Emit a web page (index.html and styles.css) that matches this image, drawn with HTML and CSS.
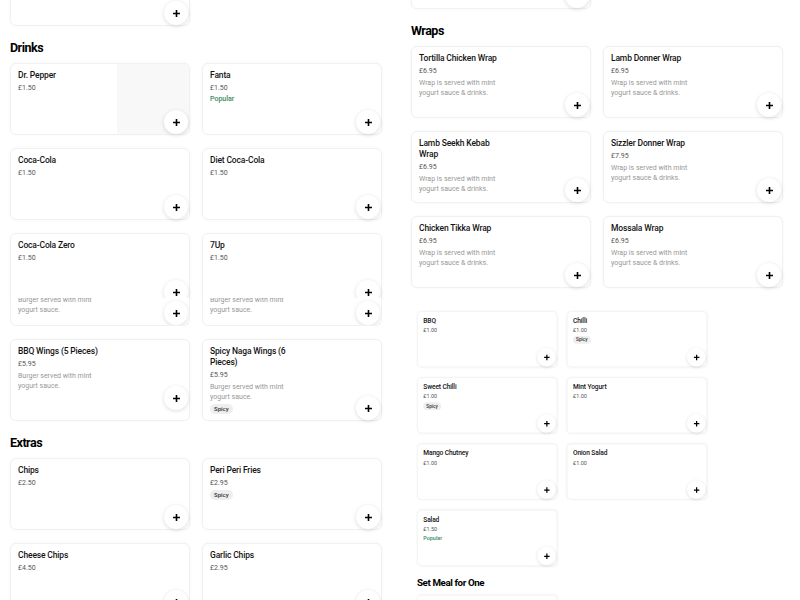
FILE: index.html
```html
<!DOCTYPE html>
<html lang="en">
<head>
<meta charset="utf-8">
<title>Menu</title>
<link rel="stylesheet" href="styles.css">
</head>
<body>
<div class="page">
  <div class="col col-left">
    <div class="grid">
      <div class="card"><div class="info"></div><button class="add"><svg viewBox="0 0 9 9"><path d="M4.5 1v7M1 4.5h7"/></svg></button></div>
    </div>

    <h2 class="sec-title">Drinks</h2>
    <div class="grid">
      <div class="card">
        <div class="info"><p class="name">Dr. Pepper</p><p class="price">£1.50</p></div>
        <div class="thumb"></div>
        <button class="add"><svg viewBox="0 0 9 9"><path d="M4.5 1v7M1 4.5h7"/></svg></button>
      </div>
      <div class="card">
        <div class="info"><p class="name">Fanta</p><p class="price">£1.50</p><p class="popular">Popular</p></div>
        <button class="add"><svg viewBox="0 0 9 9"><path d="M4.5 1v7M1 4.5h7"/></svg></button>
      </div>
      <div class="card">
        <div class="info"><p class="name">Coca-Cola</p><p class="price">£1.50</p></div>
        <button class="add"><svg viewBox="0 0 9 9"><path d="M4.5 1v7M1 4.5h7"/></svg></button>
      </div>
      <div class="card">
        <div class="info"><p class="name">Diet Coca-Cola</p><p class="price">£1.50</p></div>
        <button class="add"><svg viewBox="0 0 9 9"><path d="M4.5 1v7M1 4.5h7"/></svg></button>
      </div>
      <div class="stack">
        <div class="card">
          <div class="info"><p class="name">Coca-Cola Zero</p><p class="price">£1.50</p></div>
          <button class="add"><svg viewBox="0 0 9 9"><path d="M4.5 1v7M1 4.5h7"/></svg></button>
        </div>
        <div class="card ghost">
          <p class="desc">Burger served with mint<br>yogurt sauce.</p>
          <button class="add"><svg viewBox="0 0 9 9"><path d="M4.5 1v7M1 4.5h7"/></svg></button>
        </div>
      </div>
      <div class="stack">
        <div class="card">
          <div class="info"><p class="name">7Up</p><p class="price">£1.50</p></div>
          <button class="add"><svg viewBox="0 0 9 9"><path d="M4.5 1v7M1 4.5h7"/></svg></button>
        </div>
        <div class="card ghost">
          <p class="desc">Burger served with mint<br>yogurt sauce.</p>
          <button class="add"><svg viewBox="0 0 9 9"><path d="M4.5 1v7M1 4.5h7"/></svg></button>
        </div>
      </div>
      <div class="card">
        <div class="info"><p class="name">BBQ Wings (5 Pieces)</p><p class="price">£5.95</p><p class="desc">Burger served with mint yogurt sauce.</p></div>
        <button class="add add-raised"><svg viewBox="0 0 9 9"><path d="M4.5 1v7M1 4.5h7"/></svg></button>
      </div>
      <div class="card">
        <div class="info"><p class="name">Spicy Naga Wings (6 Pieces)</p><p class="price">£5.95</p><p class="desc">Burger served with mint yogurt sauce.</p><span class="tag tag-gap">Spicy</span></div>
        <button class="add"><svg viewBox="0 0 9 9"><path d="M4.5 1v7M1 4.5h7"/></svg></button>
      </div>
    </div>

    <h2 class="sec-title">Extras</h2>
    <div class="grid">
      <div class="card">
        <div class="info"><p class="name">Chips</p><p class="price">£2.50</p></div>
        <button class="add"><svg viewBox="0 0 9 9"><path d="M4.5 1v7M1 4.5h7"/></svg></button>
      </div>
      <div class="card">
        <div class="info"><p class="name">Peri Peri Fries</p><p class="price">£2.95</p><span class="tag">Spicy</span></div>
        <button class="add"><svg viewBox="0 0 9 9"><path d="M4.5 1v7M1 4.5h7"/></svg></button>
      </div>
      <div class="card">
        <div class="info"><p class="name">Cheese Chips</p><p class="price">£4.50</p></div>
        <button class="add"><svg viewBox="0 0 9 9"><path d="M4.5 1v7M1 4.5h7"/></svg></button>
      </div>
      <div class="card">
        <div class="info"><p class="name">Garlic Chips</p><p class="price">£2.95</p></div>
        <button class="add"><svg viewBox="0 0 9 9"><path d="M4.5 1v7M1 4.5h7"/></svg></button>
      </div>
    </div>
  </div>

  <div class="col col-right">
    <div class="grid">
      <div class="card"><div class="info"></div><button class="add"><svg viewBox="0 0 9 9"><path d="M4.5 1v7M1 4.5h7"/></svg></button></div>
    </div>

    <h2 class="sec-title">Wraps</h2>
    <div class="grid">
      <div class="card">
        <div class="info"><p class="name">Tortilla Chicken Wrap</p><p class="price">£6.95</p><p class="desc">Wrap is served with mint yogurt sauce &amp; drinks.</p></div>
        <button class="add"><svg viewBox="0 0 9 9"><path d="M4.5 1v7M1 4.5h7"/></svg></button>
      </div>
      <div class="card">
        <div class="info"><p class="name">Lamb Donner Wrap</p><p class="price">£6.95</p><p class="desc">Wrap is served with mint yogurt sauce &amp; drinks.</p></div>
        <button class="add"><svg viewBox="0 0 9 9"><path d="M4.5 1v7M1 4.5h7"/></svg></button>
      </div>
      <div class="card">
        <div class="info"><p class="name">Lamb Seekh Kebab Wrap</p><p class="price">£6.95</p><p class="desc">Wrap is served with mint yogurt sauce &amp; drinks.</p></div>
        <button class="add"><svg viewBox="0 0 9 9"><path d="M4.5 1v7M1 4.5h7"/></svg></button>
      </div>
      <div class="card">
        <div class="info"><p class="name">Sizzler Donner Wrap</p><p class="price">£7.95</p><p class="desc">Wrap is served with mint yogurt sauce &amp; drinks.</p></div>
        <button class="add"><svg viewBox="0 0 9 9"><path d="M4.5 1v7M1 4.5h7"/></svg></button>
      </div>
      <div class="card">
        <div class="info"><p class="name">Chicken Tikka Wrap</p><p class="price">£6.95</p><p class="desc">Wrap is served with mint yogurt sauce &amp; drinks.</p></div>
        <button class="add"><svg viewBox="0 0 9 9"><path d="M4.5 1v7M1 4.5h7"/></svg></button>
      </div>
      <div class="card">
        <div class="info"><p class="name">Mossala Wrap</p><p class="price">£6.95</p><p class="desc">Wrap is served with mint yogurt sauce &amp; drinks.</p></div>
        <button class="add"><svg viewBox="0 0 9 9"><path d="M4.5 1v7M1 4.5h7"/></svg></button>
      </div>
    </div>

    <div class="sauces">
      <div class="grid">
        <div class="card">
          <div class="info"><p class="name">BBQ</p><p class="price">£1.00</p></div>
          <button class="add"><svg viewBox="0 0 9 9"><path d="M4.5 1v7M1 4.5h7"/></svg></button>
        </div>
        <div class="card">
          <div class="info"><p class="name">Chilli</p><p class="price">£1.00</p><span class="tag">Spicy</span></div>
          <button class="add"><svg viewBox="0 0 9 9"><path d="M4.5 1v7M1 4.5h7"/></svg></button>
        </div>
        <div class="card">
          <div class="info"><p class="name">Sweet Chilli</p><p class="price">£1.00</p><span class="tag">Spicy</span></div>
          <button class="add"><svg viewBox="0 0 9 9"><path d="M4.5 1v7M1 4.5h7"/></svg></button>
        </div>
        <div class="card">
          <div class="info"><p class="name">Mint Yogurt</p><p class="price">£1.00</p></div>
          <button class="add"><svg viewBox="0 0 9 9"><path d="M4.5 1v7M1 4.5h7"/></svg></button>
        </div>
        <div class="card">
          <div class="info"><p class="name">Mango Chutney</p><p class="price">£1.00</p></div>
          <button class="add"><svg viewBox="0 0 9 9"><path d="M4.5 1v7M1 4.5h7"/></svg></button>
        </div>
        <div class="card">
          <div class="info"><p class="name">Onion Salad</p><p class="price">£1.00</p></div>
          <button class="add"><svg viewBox="0 0 9 9"><path d="M4.5 1v7M1 4.5h7"/></svg></button>
        </div>
        <div class="card">
          <div class="info"><p class="name">Salad</p><p class="price">£1.50</p><p class="popular">Popular</p></div>
          <button class="add"><svg viewBox="0 0 9 9"><path d="M4.5 1v7M1 4.5h7"/></svg></button>
        </div>
      </div>
      <h2 class="sec-title">Set Meal for One</h2>
      <div class="grid">
        <div class="card"><div class="info"></div></div>
      </div>
    </div>
  </div>
</div>
</body>
</html>
```

FILE: styles.css
```css
* { box-sizing: border-box; }

html, body {
  margin: 0;
  padding: 0;
  background: #ffffff;
  overflow: hidden;
}

body {
  font-family: Roboto, "Noto Sans", "Liberation Sans", sans-serif;
  color: #111111;
}

p { margin: 0; }

.page {
  display: flex;
  align-items: flex-start;
  gap: 29px;
  padding-left: 10px;
  height: 600px;
  overflow: hidden;
}

.col {
  width: 372px;
  flex: none;
}

.col-left { margin-top: -46px; }
.col-right { margin-top: -63px; }

.sec-title {
  margin: 14px 0 7px;
  font-size: 12.5px;
  line-height: 16px;
  font-weight: 700;
  letter-spacing: -0.5px;
  color: #000000;
}

.grid {
  display: grid;
  grid-template-columns: 180px 180px;
  gap: 13px 12px;
}

.card {
  position: relative;
  display: grid;
  grid-template-columns: 1fr 72px;
  min-height: 72px;
  background: #ffffff;
  border: 1px solid #f1f1f1;
  border-radius: 6px;
  box-shadow: 0 0 3px rgba(0, 0, 0, 0.04);
}

.info {
  grid-column: 1;
  padding: 6px 8px 6px 7px;
  max-width: 98px;
  font-size: 7px;
  line-height: 10px;
}

.thumb {
  grid-column: 2;
  background: #f8f8f8;
  border-radius: 0 5px 5px 0;
}

.name {
  font-size: 8.5px;
  line-height: 11px;
  font-weight: 500;
  letter-spacing: -0.15px;
  color: #141414;
}

.price {
  margin-top: 1px;
  font-size: 7px;
  line-height: 12px;
  color: #545454;
}

.desc {
  margin-top: 1px;
  font-size: 7px;
  line-height: 10px;
  color: #979797;
}

.popular {
  font-size: 7px;
  line-height: 10px;
  font-weight: 500;
  color: #3a8a5e;
}

.tag {
  display: block;
  width: fit-content;
  margin-top: 1px;
  padding: 0 4px;
  height: 10px;
  line-height: 10px;
  font-size: 6px;
  font-weight: 500;
  color: #333333;
  background: #eeeeee;
  border-radius: 5px;
}

.tag-gap { margin-top: 2px; }

.add {
  position: absolute;
  right: 1px;
  bottom: 0;
  width: 24px;
  height: 24px;
  padding: 0;
  border: none;
  border-radius: 50%;
  background: #ffffff;
  box-shadow: 0 1px 4px rgba(0, 0, 0, 0.14);
  display: flex;
  align-items: center;
  justify-content: center;
}

.add svg {
  width: 9px;
  height: 9px;
  fill: none;
  stroke: #000000;
  stroke-width: 1.6;
}

.add-raised { bottom: 10px; }

.stack {
  display: flex;
  flex-direction: column;
}

.ghost {
  display: block;
  min-height: 0;
  height: 28px;
  margin-top: -7px;
  border-top: none;
  border-radius: 0 0 6px 6px;
  overflow: hidden;
  padding: 0 7px;
  box-shadow: none;
  font-size: 7px;
  line-height: 10px;
}

.ghost .desc {
  margin-top: -3px;
  max-width: 86px;
}

.sauces {
  width: 372px;
  margin: 23px 0 0 6px;
  transform: scale(0.78);
  transform-origin: 0 0;
}
```
